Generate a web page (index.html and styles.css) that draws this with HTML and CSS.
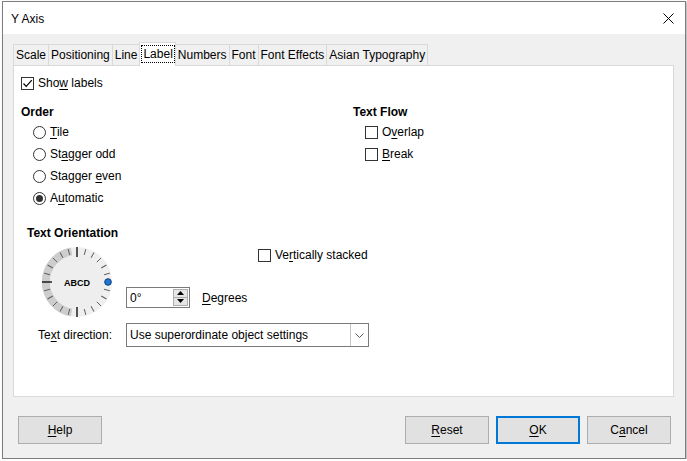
FILE: index.html
```html
<!DOCTYPE html>
<html>
<head>
<meta charset="utf-8">
<link rel="stylesheet" href="styles.css">
</head>
<body>
<div class="window">
  <div class="titlebar">
    <span class="title">Y Axis</span>
    <svg class="close" width="11" height="11" viewBox="0 0 11 11"><path d="M0.5 0.5 L10.5 10.5 M10.5 0.5 L0.5 10.5" stroke="#000" stroke-width="1" fill="none"/></svg>
  </div>
  <div class="body">
    <div class="tabs">
      <div class="tab">Scale</div>
      <div class="tab">Positioning</div>
      <div class="tab">Line</div>
      <div class="tab active"><span class="focus">Label</span></div>
      <div class="tab">Numbers</div>
      <div class="tab">Font</div>
      <div class="tab">Font Effects</div>
      <div class="tab">Asian Typography</div>
    </div>
    <div class="panel">
      <div class="row">
        <span class="check"><svg width="11" height="11" viewBox="0 0 11 11"><path d="M1.5 5.5 L4.2 8.3 L9.8 2.2" stroke="#000" stroke-width="1.2" fill="none"/></svg></span>
        <span>Sho<u>w</u> labels</span>
      </div>
      <div class="cols">
        <div class="col">
          <div class="heading">Order</div>
          <div class="row indent"><span class="radio"></span><span><u>T</u>ile</span></div>
          <div class="row indent"><span class="radio"></span><span>St<u>a</u>gger odd</span></div>
          <div class="row indent"><span class="radio"></span><span>Stagger <u>e</u>ven</span></div>
          <div class="row indent"><span class="radio on"></span><span>A<u>u</u>tomatic</span></div>
        </div>
        <div class="col">
          <div class="heading">Text Flow</div>
          <div class="row indent"><span class="check"></span><span>O<u>v</u>erlap</span></div>
          <div class="row indent"><span class="check"></span><span><u>B</u>reak</span></div>
        </div>
      </div>
      <div class="heading orient-h">Text Orientation</div>
      <div class="orient">
        <svg class="dial" width="72" height="72" viewBox="0 0 72 72">
          <defs>
            <line id="mn" x1="36" y1="2" x2="36" y2="8" stroke="#5a5a5a" stroke-width="0.9"/>
            <line id="mj" x1="36" y1="1" x2="36" y2="11" stroke="#000" stroke-width="1.3"/>
          </defs>
          <circle cx="36" cy="36" r="35" fill="#efefef"/>
          <path d="M29.9 1.5 A35 35 0 0 0 29.9 70.5 L31.3 62.6 A27 27 0 0 1 31.3 9.4 Z" fill="#cdcdcd"/>
          <circle cx="36" cy="36" r="27" fill="#eeeeee"/>
          <use href="#mj"/>
          <use href="#mn" transform="rotate(15 36 36)"/>
          <use href="#mn" transform="rotate(30 36 36)"/>
          <use href="#mn" transform="rotate(45 36 36)"/>
          <use href="#mn" transform="rotate(60 36 36)"/>
          <use href="#mn" transform="rotate(75 36 36)"/>
          <use href="#mn" transform="rotate(105 36 36)"/>
          <use href="#mn" transform="rotate(120 36 36)"/>
          <use href="#mn" transform="rotate(135 36 36)"/>
          <use href="#mn" transform="rotate(150 36 36)"/>
          <use href="#mn" transform="rotate(165 36 36)"/>
          <use href="#mj" transform="rotate(180 36 36)"/>
          <use href="#mn" transform="rotate(195 36 36)"/>
          <use href="#mn" transform="rotate(210 36 36)"/>
          <use href="#mn" transform="rotate(225 36 36)"/>
          <use href="#mn" transform="rotate(240 36 36)"/>
          <use href="#mn" transform="rotate(255 36 36)"/>
          <use href="#mj" transform="rotate(270 36 36)"/>
          <use href="#mn" transform="rotate(285 36 36)"/>
          <use href="#mn" transform="rotate(300 36 36)"/>
          <use href="#mn" transform="rotate(315 36 36)"/>
          <use href="#mn" transform="rotate(330 36 36)"/>
          <use href="#mn" transform="rotate(345 36 36)"/>
          <circle cx="67" cy="36" r="3.3" fill="#1f74d6" stroke="#0c3f7c" stroke-width="1"/>
          <text x="36" y="39.5" text-anchor="middle" class="abcd">ABCD</text>
        </svg>
        <div class="orient-right">
          <div class="row vstack"><span class="check"></span><span>Ve<u>r</u>tically stacked</span></div>
          <div class="spinrow">
            <div class="spin">
              <span class="spin-val">0°</span>
              <span class="spin-btns">
                <span class="sbtn"><svg width="7" height="4" viewBox="0 0 7 4"><path d="M0 4 L3.5 0 L7 4 Z" fill="#000"/></svg></span>
                <span class="sbtn"><svg width="7" height="4" viewBox="0 0 7 4"><path d="M0 0 L3.5 4 L7 0 Z" fill="#000"/></svg></span>
              </span>
            </div>
            <span class="degrees"><u>D</u>egrees</span>
          </div>
        </div>
      </div>
      <div class="dirrow">
        <span class="dirlabel">Te<u>x</u>t direction:</span>
        <div class="select">
          <span class="select-val">Use superordinate object settings</span>
          <span class="select-btn"><svg width="9" height="5" viewBox="0 0 9 5"><path d="M0.5 0.5 L4.5 4.5 L8.5 0.5" stroke="#555" stroke-width="1" fill="none"/></svg></span>
        </div>
      </div>
    </div>
    <div class="buttons">
      <div class="btn"><span><u>H</u>elp</span></div>
      <div class="spacer"></div>
      <div class="btn"><span><u>R</u>eset</span></div>
      <div class="btn default"><span><u>O</u>K</span></div>
      <div class="btn"><span>C<u>a</u>ncel</span></div>
    </div>
  </div>
</div>
</body>
</html>
```

FILE: styles.css
```css
* { box-sizing: border-box; }
html, body { margin: 0; padding: 0; background: #ffffff; }
body {
  font-family: "Liberation Sans", Arial, sans-serif;
  font-size: 12px;
  color: #000;
}
u { text-decoration: underline; text-underline-offset: 2px; }

.window {
  margin: 1px 0 0 2px;
  width: 684px;
  height: 458px;
  border: 1px solid #7d7d7d;
  box-shadow: 1px 1px 2px rgba(0,0,0,0.35);
  display: flex;
  flex-direction: column;
  background: #f0f0f0;
}
.titlebar {
  height: 32px;
  background: #fff;
  display: flex;
  align-items: center;
  justify-content: space-between;
  padding: 0 11px 0 8px;
}
.title { font-size: 12px; padding-top: 1px; }
.close { display: block; }

.body {
  flex: 1;
  padding: 8px 11px 0 10px;
  display: flex;
  flex-direction: column;
}
.tabs {
  display: flex;
  align-items: flex-end;
  height: 23px;
  position: relative;
  z-index: 1;
}
.tab {
  height: 21px;
  padding: 0 2px 0 2px;
  border: 1px solid #d9d9d9;
  border-bottom: none;
  margin-left: -1px;
  background: #f0f0f0;
  display: flex;
  align-items: center;
  white-space: nowrap;
}
.tab:first-child { margin-left: 0; }
.tab.active {
  height: 24px;
  margin-bottom: -1px;
  background: #fff;
  padding: 0 1px 2px 2px;
}
.focus {
  outline: 1px dotted #000;
  outline-offset: 0px;
  padding: 0 1px;
  line-height: 16px;
}

.panel {
  height: 332px;
  background: #fff;
  border: 1px solid #d9d9d9;
  padding: 6px 0 0 7px;
  display: flex;
  flex-direction: column;
}
.row {
  height: 22px;
  display: flex;
  align-items: center;
  gap: 4px;
}
.indent { padding-left: 12px; }
.check {
  width: 13px;
  height: 13px;
  border: 1px solid #333;
  background: #fff;
  display: flex;
  align-items: center;
  justify-content: center;
  flex: none;
}
.check svg { display: block; }
.radio {
  width: 13px;
  height: 13px;
  border: 1px solid #333;
  border-radius: 50%;
  background: #fff;
  flex: none;
  display: flex;
  align-items: center;
  justify-content: center;
}
.radio.on::after {
  content: "";
  width: 7px;
  height: 7px;
  border-radius: 50%;
  background: #333;
}
.cols {
  display: grid;
  grid-template-columns: 332px 1fr;
  margin-top: 9px;
}
.heading {
  height: 18px;
  display: flex;
  align-items: center;
  font-weight: bold;
}
.orient-h { margin-top: 15px; margin-left: 6px; }

.orient {
  display: flex;
  align-items: flex-start;
}
.dial {
  display: block;
  margin: 4px 0 0 20px;
}
.abcd { font-family: "Liberation Sans", Arial, sans-serif; font-weight: bold; font-size: 9px; }
.orient-right {
  margin-left: 13px;
  padding-top: 2px;
  display: flex;
  flex-direction: column;
}
.vstack { padding-left: 132px; }
.spinrow {
  margin-top: 21px;
  display: flex;
  align-items: center;
}
.spin {
  width: 64px;
  height: 21px;
  border: 1px solid #7a7a7a;
  background: #fff;
  display: flex;
  align-items: center;
  justify-content: space-between;
  padding: 0 1px 0 3px;
}
.spin-btns {
  display: flex;
  flex-direction: column;
  height: 17px;
}
.sbtn {
  width: 15px;
  height: 8.5px;
  background: #e6e6e6;
  border: 1px solid #adadad;
  display: flex;
  align-items: center;
  justify-content: center;
}
.sbtn + .sbtn { border-top: none; }
.sbtn svg { display: block; }
.degrees { margin-left: 12px; }

.dirrow {
  margin-top: 5px;
  display: flex;
  align-items: center;
}
.dirlabel {
  width: 88px;
  margin-left: 17px;
}
.select {
  width: 243px;
  height: 24px;
  border: 1px solid #7a7a7a;
  background: #fff;
  display: flex;
  align-items: center;
  justify-content: space-between;
}
.select-val { padding-left: 3px; }
.select-btn {
  width: 18px;
  height: 22px;
  border-left: 1px solid #c4c4c4;
  display: flex;
  align-items: center;
  justify-content: center;
}
.select-btn svg { display: block; }

.buttons {
  margin-top: 19px;
  display: flex;
  gap: 7px;
  padding: 0 3px 0 5px;
}
.spacer { flex: 1; }
.btn {
  width: 84px;
  height: 28px;
  background: #e1e1e1;
  border: 1px solid #adadad;
  display: flex;
  align-items: center;
  justify-content: center;
}
.btn.default {
  border: 2px solid #0078d7;
}
```
